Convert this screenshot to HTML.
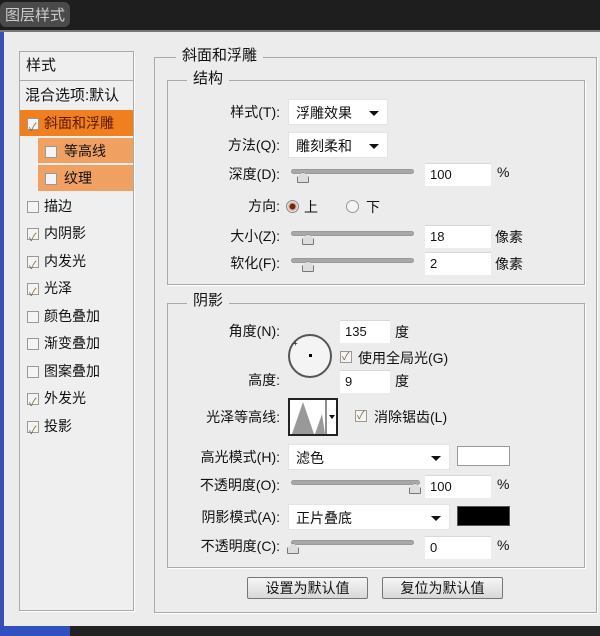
<!DOCTYPE html>
<html><head><meta charset="utf-8"><style>
*{margin:0;padding:0;box-sizing:border-box}
body{width:600px;height:636px;overflow:hidden;background:#ececec;position:relative;font-family:"Liberation Sans","Noto Sans CJK SC",sans-serif;font-size:14px;color:#111}
.a{position:absolute;white-space:nowrap}
.lbl{position:absolute;text-align:right;width:120px;line-height:18px}
.in{position:absolute;background:#fff;border-top:1px solid #d8d8d8;height:23px;line-height:22px;padding-left:5px;font-size:13px}
.dd{position:absolute;background:#fff;height:26px;line-height:26px;padding-left:7px;border:1px solid #e4e4e4}
.dd:after{content:"";position:absolute;right:8px;top:11px;border-left:5px solid transparent;border-right:5px solid transparent;border-top:5px solid #111}
.tr{position:absolute;height:5px;background:#a8a8a8;border-radius:3px;border:1px solid #999}
.th{position:absolute;width:12px;height:11px;background:#ddd;border:1px solid #777;border-radius:2px 2px 1px 1px;clip-path:polygon(50% 0,100% 45%,100% 100%,0 100%,0 45%)}
.box{position:absolute;border:1px solid #aaa;box-shadow:1px 1px 0 #fff}
.leg{position:absolute;background:#ececec;padding:0 6px;line-height:18px;font-size:15px}
.cb{position:absolute;width:12px;height:12px;border:1px solid #999;background:#f4f4f4}
.cb.k:after{content:"✓";position:absolute;left:1px;top:-4px;font-size:11px;color:#8a6a40}
.row{position:absolute;left:20px;width:113px;height:27px;line-height:27px}
.row .cb{left:7px;top:8px}
.row span{position:absolute;left:24px}
.btn{position:absolute;height:22px;line-height:20px;text-align:center;border:1px solid #777;border-radius:2px;background:linear-gradient(#f6f6f6,#d8d8d8);font-size:14px}
</style></head><body>
<div class="a" style="left:0;top:0;width:600px;height:30px;background:#1e1e1e"></div>
<div class="a" style="left:0;top:2px;color:#ccc;font-size:15px;background:#4a4a4a;padding:2px 5px;border-radius:6px">图层样式</div>
<div class="a" style="left:0;top:30px;width:600px;height:2px;background:#777"></div>
<div class="a" style="left:0;top:32px;width:4px;height:598px;background:#3a4fb0"></div>
<div class="a" style="left:0;top:626px;width:600px;height:10px;background:#222"></div>
<div class="a" style="left:0;top:626px;width:70px;height:10px;background:#3150c0"></div>

<div class="box" style="left:19px;top:51px;width:115px;height:560px;background:#efefef"></div>
<div class="a" style="left:26px;top:54px;font-size:15px">样式</div>
<div class="a" style="left:20px;top:80px;width:113px;height:1px;background:#aaa"></div>
<div class="a" style="left:25px;top:84px;font-size:15px">混合选项:默认</div>
<div class="row" style="top:110px;background:#f07f20;height:26px"><div class="cb k"></div><span style="color:#5a1800">斜面和浮雕</span></div>
<div class="row" style="top:138px;left:38px;width:95px;background:#f0a060;height:25px"><div class="cb"></div><span style="left:26px">等高线</span></div>
<div class="row" style="top:165px;left:38px;width:95px;background:#f0a060;height:26px"><div class="cb"></div><span style="left:26px">纹理</span></div>
<div class="row" style="top:193px"><div class="cb"></div><span>描边</span></div>
<div class="row" style="top:220px"><div class="cb k"></div><span>内阴影</span></div>
<div class="row" style="top:248px"><div class="cb k"></div><span>内发光</span></div>
<div class="row" style="top:275px"><div class="cb k"></div><span>光泽</span></div>
<div class="row" style="top:303px"><div class="cb"></div><span>颜色叠加</span></div>
<div class="row" style="top:330px"><div class="cb"></div><span>渐变叠加</span></div>
<div class="row" style="top:358px"><div class="cb"></div><span>图案叠加</span></div>
<div class="row" style="top:385px"><div class="cb k"></div><span>外发光</span></div>
<div class="row" style="top:413px"><div class="cb k"></div><span>投影</span></div>

<div class="box" style="left:154px;top:57px;width:443px;height:556px"></div>
<div class="leg" style="left:176px;top:47px">斜面和浮雕</div>
<div class="box" style="left:167px;top:80px;width:418px;height:205px"></div>
<div class="leg" style="left:187px;top:70px">结构</div>

<div class="lbl" style="left:160px;top:103px">样式(T):</div>
<div class="dd" style="left:288px;top:99px;width:100px">浮雕效果</div>
<div class="lbl" style="left:160px;top:136px">方法(Q):</div>
<div class="dd" style="left:288px;top:132px;width:100px">雕刻柔和</div>
<div class="lbl" style="left:160px;top:165px">深度(D):</div>
<div class="tr" style="left:291px;top:169px;width:123px"></div><div class="th" style="left:297px;top:172px"></div>
<div class="in" style="left:425px;top:163px;width:66px">100</div><div class="a" style="left:497px;top:164px">%</div>
<div class="lbl" style="left:160px;top:197px">方向:</div>
<div class="a" style="left:286px;top:200px;width:13px;height:13px;border-radius:50%;border:1px solid #888;background:radial-gradient(#6a2a10 35%,#d0a090 40%,#eee 70%)"></div>
<div class="a" style="left:304px;top:197px">上</div>
<div class="a" style="left:346px;top:200px;width:13px;height:13px;border-radius:50%;border:1px solid #999;background:#f4f4f4"></div>
<div class="a" style="left:366px;top:197px">下</div>
<div class="lbl" style="left:160px;top:227px">大小(Z):</div>
<div class="tr" style="left:291px;top:231px;width:123px"></div><div class="th" style="left:302px;top:234px"></div>
<div class="in" style="left:425px;top:225px;width:66px">18</div><div class="a" style="left:495px;top:227px">像素</div>
<div class="lbl" style="left:160px;top:254px">软化(F):</div>
<div class="tr" style="left:291px;top:258px;width:123px"></div><div class="th" style="left:302px;top:261px"></div>
<div class="in" style="left:425px;top:252px;width:66px">2</div><div class="a" style="left:495px;top:254px">像素</div>

<div class="box" style="left:167px;top:303px;width:418px;height:265px"></div>
<div class="leg" style="left:187px;top:292px">阴影</div>
<div class="lbl" style="left:160px;top:322px">角度(N):</div>
<div class="a" style="left:288px;top:334px;width:44px;height:44px;border-radius:50%;border:2px solid #555;background:#f4f4f4"></div>
<div class="a" style="left:309px;top:354px;width:3px;height:3px;background:#000"></div>
<div class="a" style="left:293px;top:339px;font-size:8px">+</div>
<div class="in" style="left:340px;top:320px;width:50px">135</div><div class="a" style="left:395px;top:322px">度</div>
<div class="cb k" style="left:340px;top:351px"></div><div class="a" style="left:358px;top:348px">使用全局光(G)</div>
<div class="lbl" style="left:160px;top:371px">高度:</div>
<div class="in" style="left:340px;top:370px;width:50px">9</div><div class="a" style="left:395px;top:371px">度</div>
<div class="lbl" style="left:160px;top:408px">光泽等高线:</div>
<div class="a" style="left:288px;top:398px;width:50px;height:38px;border:2px solid #222;background:#fff;overflow:hidden">
<svg width="46" height="34" style="position:absolute;left:0;top:0"><polygon points="2,34 13,2 24,34" fill="#999"/><polygon points="25,34 32,14 35,34" fill="#999"/><line x1="36" y1="0" x2="36" y2="34" stroke="#222"/><polygon points="39,15 45,15 42,19" fill="#111"/></svg></div>
<div class="cb k" style="left:355px;top:410px"></div><div class="a" style="left:374px;top:407px">消除锯齿(L)</div>
<div class="lbl" style="left:160px;top:448px">高光模式(H):</div>
<div class="dd" style="left:288px;top:444px;width:162px">滤色</div>
<div class="a" style="left:457px;top:446px;width:53px;height:20px;background:#fff;border:1px solid #999"></div>
<div class="lbl" style="left:160px;top:476px">不透明度(O):</div>
<div class="tr" style="left:291px;top:480px;width:129px"></div><div class="th" style="left:409px;top:483px"></div>
<div class="in" style="left:425px;top:475px;width:66px">100</div><div class="a" style="left:497px;top:476px">%</div>
<div class="lbl" style="left:160px;top:508px">阴影模式(A):</div>
<div class="dd" style="left:288px;top:504px;width:162px">正片叠底</div>
<div class="a" style="left:457px;top:506px;width:53px;height:20px;background:#000;border:1px solid #555"></div>
<div class="lbl" style="left:160px;top:537px">不透明度(C):</div>
<div class="tr" style="left:291px;top:540px;width:123px"></div><div class="th" style="left:287px;top:543px"></div>
<div class="in" style="left:425px;top:536px;width:66px">0</div><div class="a" style="left:497px;top:537px">%</div>

<div class="btn" style="left:247px;top:577px;width:121px">设置为默认值</div>
<div class="btn" style="left:382px;top:577px;width:121px">复位为默认值</div>
</body></html>
